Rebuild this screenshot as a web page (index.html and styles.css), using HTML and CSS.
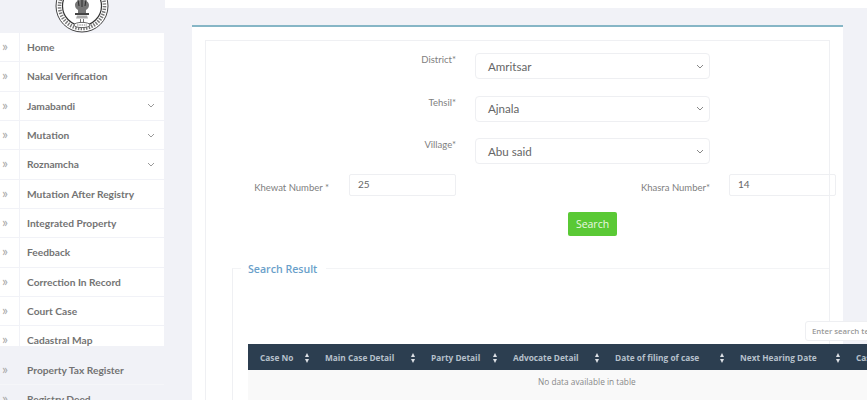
FILE: index.html
```html
<!DOCTYPE html>
<html>
<head>
  <link rel="stylesheet" href="styles.css">
</head>
<body>
  <div class="page">
    <aside class="sidebar">
      <div class="logo-box">
        <svg class="emblem" width="54" height="33" viewBox="0 0 54 33">
          <circle cx="27" cy="6" r="26" fill="#fff" stroke="#444" stroke-width="1"/>
          <circle cx="27" cy="6" r="22.5" fill="none" stroke="#777" stroke-width="3.6" stroke-dasharray="1.4 1.3"/>
          <circle cx="27" cy="6" r="19.5" fill="#fff" stroke="#333" stroke-width="1.2"/>
          <path d="M20 5c0-3 3-5 7-5s7 2 7 5c0 2-1 4-3 5v3h-8v-3c-2-1-3-3-3-5z" fill="#777"/>
          <path d="M23 0l1 6M27 0v7M31 0l-1 6" stroke="#333" stroke-width="1.100" fill="none"/>
          <path d="M20 13h14v2H20z" fill="#444"/>
          <path d="M22 15.500h10l1 3H21z" fill="#aaa"/>
          <path d="M25 19h1v3h-1zM28 19h1v3h-1z" fill="#777"/>
          <ellipse cx="27" cy="25" rx="8" ry="2.600" fill="#fff" stroke="#666" stroke-width="1"/>
          <path d="M22 25h10" stroke="#888" stroke-width="1.200" stroke-dasharray="1.500 .8"/>
        </svg>
      </div>
      <ul class="menu">
        <li class="menu-item"><span class="menu-icon">»</span><span class="menu-text">Home</span></li>
        <li class="menu-item"><span class="menu-icon">»</span><span class="menu-text">Nakal Verification</span></li>
        <li class="menu-item"><span class="menu-icon">»</span><span class="menu-text">Jamabandi</span>
          <svg class="menu-arrow" width="8" height="5" viewBox="0 0 8 5"><path d="M1 1l3 3 3-3" fill="none" stroke="#999" stroke-width="1"/></svg></li>
        <li class="menu-item"><span class="menu-icon">»</span><span class="menu-text">Mutation</span>
          <svg class="menu-arrow" width="8" height="5" viewBox="0 0 8 5"><path d="M1 1l3 3 3-3" fill="none" stroke="#999" stroke-width="1"/></svg></li>
        <li class="menu-item"><span class="menu-icon">»</span><span class="menu-text">Roznamcha</span>
          <svg class="menu-arrow" width="8" height="5" viewBox="0 0 8 5"><path d="M1 1l3 3 3-3" fill="none" stroke="#999" stroke-width="1"/></svg></li>
        <li class="menu-item"><span class="menu-icon">»</span><span class="menu-text">Mutation After Registry</span></li>
        <li class="menu-item"><span class="menu-icon">»</span><span class="menu-text">Integrated Property</span></li>
        <li class="menu-item"><span class="menu-icon">»</span><span class="menu-text">Feedback</span></li>
        <li class="menu-item"><span class="menu-icon">»</span><span class="menu-text">Correction In Record</span></li>
        <li class="menu-item"><span class="menu-icon">»</span><span class="menu-text">Court Case</span></li>
        <li class="menu-item"><span class="menu-icon">»</span><span class="menu-text">Cadastral Map</span></li>
        <li class="menu-item grey"><span class="menu-icon">»</span><span class="menu-text">Property Tax Register</span></li>
        <li class="menu-item grey"><span class="menu-icon">»</span><span class="menu-text">Registry Deed</span></li>
      </ul>
    </aside>

    <main class="main">
      <div class="topbar"></div>
      <section class="panel">
        <div class="inner">
          <div class="field-row">
            <label class="field-label">District*</label>
            <div class="select-box"><span>Amritsar</span>
              <svg width="8" height="5" viewBox="0 0 8 5"><path d="M1 1l3 3 3-3" fill="none" stroke="#888" stroke-width="1"/></svg></div>
          </div>
          <div class="field-row">
            <label class="field-label">Tehsil*</label>
            <div class="select-box"><span>Ajnala</span>
              <svg width="8" height="5" viewBox="0 0 8 5"><path d="M1 1l3 3 3-3" fill="none" stroke="#888" stroke-width="1"/></svg></div>
          </div>
          <div class="field-row">
            <label class="field-label">Village*</label>
            <div class="select-box"><span>Abu said</span>
              <svg width="8" height="5" viewBox="0 0 8 5"><path d="M1 1l3 3 3-3" fill="none" stroke="#888" stroke-width="1"/></svg></div>
          </div>
          <div class="number-row">
            <label class="num-label khewat">Khewat Number *</label>
            <div class="num-box first">25</div>
            <label class="num-label khasra">Khasra Number*</label>
            <div class="num-box">14</div>
          </div>
          <div class="button-row"><button class="search-btn">Search</button></div>

          <div class="result">
            <div class="legend">Search Result</div>
            <div class="search-line"><div class="search-input">Enter search term</div></div>
            <div class="result-table">
              <div class="table-head">
                <span class="col w-case">Case No<i class="sort"></i></span>
                <span class="col w-main">Main Case Detail<i class="sort"></i></span>
                <span class="col w-party">Party Detail<i class="sort"></i></span>
                <span class="col w-adv">Advocate Detail<i class="sort"></i></span>
                <span class="col w-date">Date of filing of case<i class="sort"></i></span>
                <span class="col w-next">Next Hearing Date<i class="sort"></i></span>
                <span class="col">Case Status</span>
              </div>
              <div class="table-empty"><span>No data available in table</span></div>
            </div>
          </div>
        </div>
      </section>
    </main>
  </div>
</body>
</html>
```

FILE: styles.css
```css
* {
  box-sizing: border-box;
}

html, body {
  margin: 0;
  height: 400px;
  overflow: hidden;
}

body {
  background-color: #f1f2f7;
  font-family: "Open Sans", sans-serif;
  color: #777;
}

.page {
  display: flex;
  width: 867px;
  height: 400px;
  overflow: hidden;
}

/* sidebar */
.sidebar {
  width: 165px;
  flex-shrink: 0;
  padding-right: 1px;
}

.logo-box {
  height: 33px;
  display: flex;
  justify-content: center;
  overflow: hidden;
}

.menu {
  list-style: none;
  margin: 0;
  padding: 0;
  background: linear-gradient(#fff 0, #fff 313px, #f1f2f7 313px);
}

.menu-item {
  height: 29.33px;
  display: flex;
  align-items: center;
  border-bottom: 1px solid #f1f2f7;
  font-family: Lato, sans-serif;
  font-size: 10.2px;
  font-weight: 700;
  color: #737373;
}

.menu-item.grey {
  border-bottom-color: #f5f6f9;
}

.menu-icon {
  width: 20px;
  height: 100%;
  flex-shrink: 0;
  display: flex;
  align-items: center;
  border-right: 1px solid #f1f2f7;
  color: #a8a8a8;
  font-size: 14px;
  font-weight: 400;
  padding: 0 0 3px 2px;
}

.menu-text {
  flex: 1;
  padding-left: 7px;
}

.menu-arrow {
  margin-right: 9px;
}

/* main area */
.main {
  flex: 1;
  min-width: 0;
}

.topbar {
  height: 8px;
  background: #fff;
}

.panel {
  width: 651px;
  height: 392px;
  margin: 17px 0 0 27px;
  padding: 13px 14px 0 13px;
  background: #fff;
  border-top: 2px solid #86b6c6;
}

.inner {
  width: 625px;
  height: 400px;
  padding-top: 12px;
  border: 1px solid #eff0f3;
  border-bottom: none;
}

.field-row {
  display: flex;
  height: 26px;
  margin-bottom: 16.5px;
}

.field-label {
  width: 250px;
  padding-top: 1px;
  text-align: right;
  font-family: Lato, sans-serif;
  font-size: 9.5px;
  line-height: 12px;
  color: #808080;
}

.select-box {
  width: 235px;
  height: 26px;
  margin-left: 19px;
  padding: 0 5px 0 12px;
  display: flex;
  align-items: center;
  justify-content: space-between;
  border: 1px solid #eeeff2;
  border-radius: 4px;
  font-family: Lato, sans-serif;
  font-size: 11.6px;
  color: #666;
}

.number-row {
  display: flex;
  height: 22px;
  margin-top: -6.5px;
  align-items: flex-start;
}

.num-label {
  flex-shrink: 0;
  font-family: Lato, sans-serif;
  font-size: 9.5px;
  line-height: 27px;
  color: #808080;
  text-align: right;
}

.khewat {
  width: 123px;
}

.khasra {
  width: 254px;
}

.num-box {
  flex-shrink: 0;
  width: 107px;
  height: 22px;
  margin-left: 19px;
  padding-left: 8px;
  border: 1px solid #eeeff2;
  border-radius: 2px;
  font-family: Lato, sans-serif;
  font-size: 10px;
  line-height: 19px;
  color: #666;
}

.num-box.first {
  margin-left: 20px;
}

.button-row {
  display: flex;
  margin-top: 16px;
  padding-left: 362px;
}

.search-btn {
  width: 49px;
  height: 24px;
  padding: 0;
  border: none;
  border-radius: 2px;
  background: #5ac935;
  color: #eaf8e2;
  font-family: "Open Sans", sans-serif;
  font-size: 10.5px;
}

/* result part */
.result {
  position: relative;
  width: 597px;
  height: 160px;
  margin: 32px 0 0 26px;
  padding: 32px 0 0 15px;
  border-left: 1px solid #eff0f3;
  border-top: 1px solid #f3f4f6;
}

.legend {
  position: absolute;
  top: -7px;
  left: 8px;
  padding: 0 9px 0 7px;
  background: #fff;
  font-size: 10.6px;
  line-height: 14px;
  font-weight: 600;
  color: #6a9fca;
}

.search-line {
  height: 43px;
  width: 620px;
  padding: 20px 0 0 557px;
}

.search-input {
  width: 90px;
  height: 20px;
  padding-left: 6px;
  white-space: nowrap;
  overflow: hidden;
  border: 1px solid #eeeff2;
  border-radius: 3px;
  background: #fff;
  font-size: 7.8px;
  font-weight: 600;
  line-height: 18px;
  color: #999;
}

.result-table {
  width: 640px;
  font-size: 8.3px;
}

.table-head {
  display: flex;
  height: 26px;
  align-items: center;
  background: #2c3e50;
  color: #b6c0cb;
  font-weight: 700;
  white-space: nowrap;
}

.col {
  display: block;
  position: relative;
  padding-left: 12px;
  flex-shrink: 0;
}

.w-case { width: 65px; }
.w-main { width: 106px; }
.w-party { width: 82px; }
.w-adv { width: 102px; }
.w-date { width: 125px; }
.w-next { width: 116px; }

.sort {
  position: absolute;
  right: 3px;
  top: 1px;
  width: 6px;
  height: 10px;
}

/* sort arrows, one up and one down */
.sort::before,
.sort::after {
  content: "";
  position: absolute;
  left: 0.5px;
  border-left: 2.5px solid transparent;
  border-right: 2.5px solid transparent;
}

.sort::before {
  top: 0;
  border-bottom: 4.5px solid #dde1e6;
}

.sort::after {
  bottom: 0;
  border-top: 4.5px solid #dde1e6;
}

.table-empty {
  height: 40px;
  background: #f9f9f9;
  padding: 6px 0 0 290px;
  color: #888;
}
```
